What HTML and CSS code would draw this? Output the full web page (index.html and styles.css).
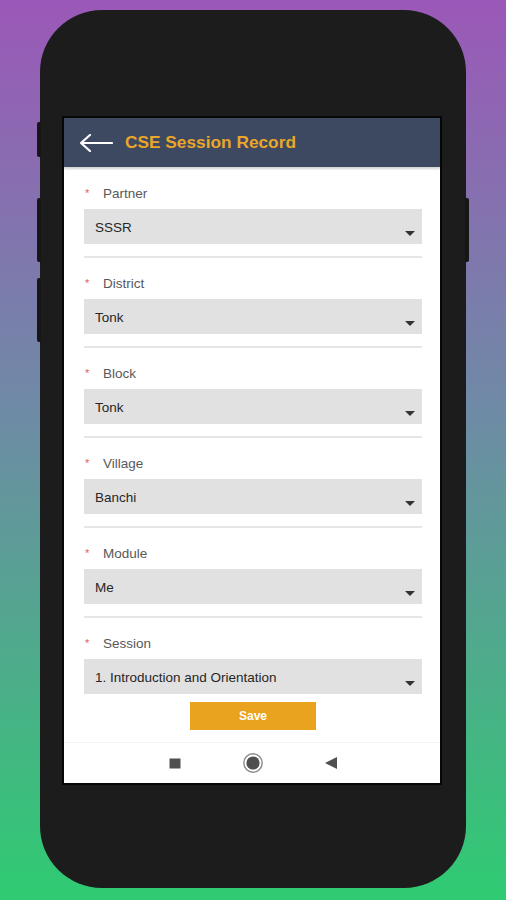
FILE: index.html
```html
<!DOCTYPE html>
<html lang="en">
<head>
<meta charset="utf-8">
<title>CSE Session Record</title>
<link rel="stylesheet" href="styles.css">
</head>
<body>
<div class="stage">
  <div class="phone">
    <span class="side-btn side-l1"></span>
    <span class="side-btn side-l2"></span>
    <span class="side-btn side-l3"></span>
    <span class="side-btn side-r1"></span>
    <div class="screen">
      <header class="appbar">
        <svg class="back" width="34" height="18" viewBox="0 0 34 18" aria-hidden="true">
          <path d="M2 9 H33 M11 1 L2 9 L11 17" fill="none" stroke="#ffffff" stroke-width="2.2" stroke-linecap="round" stroke-linejoin="round"/>
        </svg>
        <h1 class="title">CSE Session Record</h1>
      </header>

      <main class="form">
        <div class="field">
          <div class="label"><span class="req">*</span><span>Partner</span></div>
          <div class="select"><span class="value">SSSR</span><svg class="caret" width="10" height="5" viewBox="0 0 10 5"><path d="M0 0 H10 L5 5 Z" fill="#333"/></svg></div>
          <div class="divider"></div>
        </div>
        <div class="field">
          <div class="label"><span class="req">*</span><span>District</span></div>
          <div class="select"><span class="value">Tonk</span><svg class="caret" width="10" height="5" viewBox="0 0 10 5"><path d="M0 0 H10 L5 5 Z" fill="#333"/></svg></div>
          <div class="divider"></div>
        </div>
        <div class="field">
          <div class="label"><span class="req">*</span><span>Block</span></div>
          <div class="select"><span class="value">Tonk</span><svg class="caret" width="10" height="5" viewBox="0 0 10 5"><path d="M0 0 H10 L5 5 Z" fill="#333"/></svg></div>
          <div class="divider"></div>
        </div>
        <div class="field">
          <div class="label"><span class="req">*</span><span>Village</span></div>
          <div class="select"><span class="value">Banchi</span><svg class="caret" width="10" height="5" viewBox="0 0 10 5"><path d="M0 0 H10 L5 5 Z" fill="#333"/></svg></div>
          <div class="divider"></div>
        </div>
        <div class="field">
          <div class="label"><span class="req">*</span><span>Module</span></div>
          <div class="select"><span class="value">Me</span><svg class="caret" width="10" height="5" viewBox="0 0 10 5"><path d="M0 0 H10 L5 5 Z" fill="#333"/></svg></div>
          <div class="divider"></div>
        </div>
        <div class="field">
          <div class="label"><span class="req">*</span><span>Session</span></div>
          <div class="select"><span class="value">1. Introduction and Orientation</span><svg class="caret" width="10" height="5" viewBox="0 0 10 5"><path d="M0 0 H10 L5 5 Z" fill="#333"/></svg></div>
        </div>
      </main>

      <div class="actions">
        <button class="save" type="button">Save</button>
      </div>

      <nav class="navbar">
        <span class="nav-item">
          <svg width="12" height="11" viewBox="0 0 12 11"><rect x="0.5" y="0.5" width="11" height="10" fill="#4f4f4f"/></svg>
        </span>
        <span class="nav-item">
          <svg width="20" height="20" viewBox="0 0 20 20"><circle cx="10" cy="10" r="9.2" fill="none" stroke="#8a8a8a" stroke-width="1.4"/><circle cx="10" cy="10" r="6.6" fill="#4f4f4f"/></svg>
        </span>
        <span class="nav-item">
          <svg width="12" height="12" viewBox="0 0 12 12"><path d="M12 0 V12 L0 6 Z" fill="#4f4f4f"/></svg>
        </span>
      </nav>
    </div>
  </div>
</div>
</body>
</html>
```

FILE: styles.css
```css
html, body {
  margin: 0;
  padding: 0;
}

body {
  width: 506px;
  height: 900px;
  overflow: hidden;
  background: linear-gradient(to bottom, #9b58b8 0%, #6f8aa6 45%, #2fcb72 100%);
  font-family: "Liberation Sans", Arial, sans-serif;
}

.stage {
  padding: 10px 40px 0 40px;
}

.phone {
  position: relative;
  box-sizing: border-box;
  width: 426px;
  height: 878px;
  border-radius: 62px;
  background: #1c1c1c;
  padding: 106px 0 0 22px;
}

.side-btn {
  position: absolute;
  width: 4px;
  background: #161616;
}
.side-l1 { left: -3px; top: 112px; height: 35px; border-radius: 2px 0 0 2px; }
.side-l2 { left: -3px; top: 188px; height: 64px; border-radius: 2px 0 0 2px; }
.side-l3 { left: -3px; top: 268px; height: 64px; border-radius: 2px 0 0 2px; }
.side-r1 { right: -3px; top: 188px; height: 64px; border-radius: 0 2px 2px 0; }

.screen {
  width: 376px;
  border: 2px solid #070707;
  background: #ffffff;
  display: flex;
  flex-direction: column;
}

.appbar {
  height: 49px;
  background: #3d4861;
  display: flex;
  align-items: center;
  padding-left: 15px;
  gap: 12px;
  box-shadow: 0 2px 2px rgba(0, 0, 0, 0.18);
  position: relative;
  z-index: 1;
}

.back {
  display: block;
  margin-top: 1px;
}

.title {
  margin: 0;
  font-size: 17.3px;
  font-weight: bold;
  color: #e9a628;
  letter-spacing: 0;
}

.form {
  padding: 18px 18px 0 20px;
}

.label {
  display: flex;
  align-items: center;
  height: 16px;
  font-size: 13.5px;
  color: #585858;
}

.req {
  width: 19px;
  color: #e85a5a;
  font-size: 11px;
  padding-left: 1px;
  box-sizing: border-box;
}

.select {
  margin-top: 8px;
  height: 35px;
  background: #e1e1e1;
  display: flex;
  align-items: center;
  padding-left: 11px;
  padding-right: 7px;
}

.value {
  flex: 1;
  font-size: 13.5px;
  color: #262626;
  padding-top: 1px;
}

.caret {
  align-self: flex-end;
  margin-bottom: 8px;
}

.divider {
  margin-top: 12px;
  margin-bottom: 17px;
  height: 2px;
  background: #e6e6e6;
}

.actions {
  display: flex;
  justify-content: center;
  padding-top: 8px;
  padding-left: 2px;
}

.save {
  width: 126px;
  height: 28px;
  border: none;
  background: #e9a31f;
  color: #ffffff;
  font-family: "Liberation Sans", Arial, sans-serif;
  font-weight: bold;
  font-size: 12px;
  padding: 0;
}

.navbar {
  margin-top: 12px;
  height: 40px;
  border-top: 1px solid #f5f5f5;
  display: flex;
  justify-content: center;
  align-items: center;
  gap: 58px;
  padding-left: 2px;
}

.nav-item {
  width: 20px;
  height: 20px;
  display: flex;
  align-items: center;
  justify-content: center;
}

.nav-item svg {
  display: block;
}
```
